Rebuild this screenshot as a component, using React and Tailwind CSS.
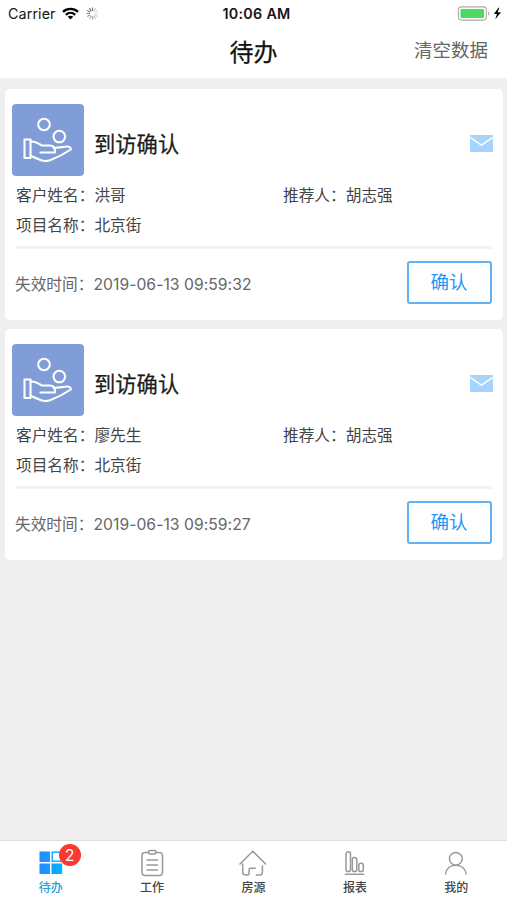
import React from 'react';

const tasks = [
  { id: 1, customer: '洪哥', time: '2019-06-13 09:59:32' },
  { id: 2, customer: '廖先生', time: '2019-06-13 09:59:27' },
];

function WifiIcon() {
  return (
    <svg className="ml-[6px] h-[13px] w-[17px]" viewBox="0 0 17 13" fill="none" stroke="#050505" strokeWidth="2.3">
      <path d="M1 4.9C5.2.9 11.8.9 16 4.9" />
      <path d="M3.8 7.8C6.5 5.3 10.5 5.3 13.2 7.8" />
      <path d="M8.5 12.5L5.7 9.8C7.3 8.4 9.7 8.4 11.3 9.8Z" fill="#050505" stroke="none" />
    </svg>
  );
}

function Spinner() {
  const shades = ['#777', '#ccc', '#ddd', '#ddd', '#ccc', '#bbb', '#aaa', '#aaa', '#999', '#888', '#777', '#666'];
  return (
    <svg className="ml-[7px] h-[13px] w-[13px]" viewBox="0 0 13 13" strokeWidth="1.2" strokeLinecap="round">
      {shades.map((c, i) => (
        <path key={i} d="M6.5 .9V3.4" stroke={c} transform={`rotate(${i * 30} 6.5 6.5)`} />
      ))}
    </svg>
  );
}

function StatusBar() {
  return (
    <div className="grid h-[27px] grid-cols-3 items-center pl-[8px] pr-[5px] text-[14.3px] text-[#151515]">
      <div className="flex items-center">
        <span className="tracking-[0.1px]">Carrier</span>
        <WifiIcon />
        <Spinner />
      </div>
      <div className="pl-[3px] text-center text-[14.3px] font-semibold tracking-[0.3px] whitespace-nowrap">10:06 AM</div>
      <svg className="h-[15px] w-[45px] justify-self-end" viewBox="0 0 45 15">
        <rect x="1.4" y=".9" width="28" height="13.2" rx="3.3" fill="none" stroke="#aaa" strokeWidth="1.1" />
        <rect x="3.5" y="3" width="23.5" height="9" rx="1" fill="#4cd964" />
        <path d="M31 5.2C32.6 6 32.6 9 31 9.8Z" fill="#aaa" />
        <path d="M41.4 1.8L36.9 8H39.9L38.3 13.3L44 6.3H40.6L42.3 1.8Z" fill="#050505" />
      </svg>
    </div>
  );
}

function HandIcon() {
  return (
    <div className="h-[72px] w-[72px] shrink-0 rounded-[4px] bg-[#809dd8]">
      <svg viewBox="0 0 72 72" fill="none" stroke="white" strokeWidth="2.1" strokeLinejoin="round" strokeLinecap="round">
        <circle cx="32" cy="20.5" r="5.8" />
        <circle cx="47.3" cy="32.6" r="5.8" />
        <path d="M12.5 35.5H18.5V54H12.5Z" />
        <path d="M19 37.5C24 37 26.5 39.5 30 41.5H38.5C42 42 43.5 44 43 48.5H28.5" />
        <path d="M41.5 43.8C47 44 51 42.5 55 42.5C57.5 42.5 59 43.5 58.8 45.5C53 49.5 44 54 38 56.2C35 57.2 31.5 57.3 28.5 56L19 52" />
      </svg>
    </div>
  );
}

function MailIcon() {
  return (
    <svg className="h-[17px] w-[23px]" viewBox="0 0 23 17">
      <path d="M0 0H23V17H0Z" fill="#a5d4fd" />
      <path d="M0 2.3L11.5 10L23 2.3" fill="none" stroke="white" strokeWidth="1.5" />
    </svg>
  );
}

function TaskCard({ customer, time }) {
  return (
    <article className="h-[231px] rounded-[5px] bg-white pt-[15px] pr-[11px] pl-[7px]">
      <div className="flex h-[72px] items-center">
        <HandIcon />
        <h2 className="ml-[10px] flex-1 pt-[8px] text-[21.3px] leading-[28px] font-normal text-[#1c1c1c] [-webkit-text-stroke:0.25px_#1c1c1c]">到访确认</h2>
        <div className="-mr-[1px] pt-[7px]"><MailIcon /></div>
      </div>
      <div className="mt-[5px] ml-[4px] grid grid-cols-[267px_1fr] text-[15.7px] leading-[30px] text-[#444]">
        <span>客户姓名：{customer}</span>
        <span>推荐人：胡志强</span>
        <span>项目名称：北京街</span>
      </div>
      <div className="mt-[5px] ml-[4px] h-[3px] bg-[#f3f3f3]" />
      <div className="mt-[12px] ml-[3px] flex items-center justify-between">
        <span className="pt-[5px] text-[15.7px] text-[#666]">失效时间：<span className="tracking-[0.04px]">{time}</span></span>
        <button className="h-[43px] w-[85px] rounded-[3px] border-2 border-[#5eb2f5] pr-[1px] text-[18.5px] text-[#2495f3]">确认</button>
      </div>
    </article>
  );
}

function TodoIcon() {
  return (
    <svg className="h-[28px] w-[28px]" viewBox="0 0 28 28">
      <defs>
        <linearGradient id="todo" gradientUnits="userSpaceOnUse" x1="2" x2="26" y1="0" y2="0">
          <stop stopColor="#2588ff" />
          <stop offset="1" stopColor="#00b7ff" />
        </linearGradient>
      </defs>
      <path d="M2.5 3.5H13V14H2.5ZM2.5 15.5H13V26H2.5ZM14.5 15.5H25.2V26H14.5Z" fill="url(#todo)" />
      <rect x="15.2" y="4.2" width="9.5" height="9" fill="none" stroke="#08a8ff" strokeWidth="1.4" />
    </svg>
  );
}

function LineIcon({ children }) {
  return (
    <svg className="h-[28px] w-[28px]" viewBox="0 0 28 28" fill="none" stroke="#999" strokeWidth="1.5" strokeLinecap="round" strokeLinejoin="round">
      {children}
    </svg>
  );
}

const tabs = [
  {
    label: '工作',
    icon: (
      <LineIcon>
        <path d="M10.5 3.5H7A3 3 0 0 0 4 6.5V23.5A3 3 0 0 0 7 26.5H21.5A3 3 0 0 0 24.5 23.5V6.5A3 3 0 0 0 21.5 3.5H18M9 11H19.5M9 16H19.5M9 21H19.5" />
        <rect x="10.5" y="1.5" width="7.4" height="3.6" rx="1.5" />
      </LineIcon>
    ),
  },
  {
    label: '房源',
    icon: (
      <LineIcon>
        <path d="M1 15L13.8 2.2L26.6 15M3.7 15V23Q3.7 26 6.7 26H8.2Q10.1 26 10.1 24V20.5Q10.1 19.3 11.3 19.3H16.3M23.4 17V23.5Q23.4 26 20.8 26H17.3" />
      </LineIcon>
    ),
  },
  {
    label: '报表',
    icon: (
      <LineIcon>
        <rect x="5" y="2.8" width="4.5" height="19.7" rx="2.1" />
        <rect x="11.3" y="8.5" width="4.5" height="14" rx="2.1" />
        <rect x="17.8" y="14.3" width="4.5" height="8.2" rx="2.1" />
        <path d="M4.5 25.3H22.7" />
      </LineIcon>
    ),
  },
  {
    label: '我的',
    icon: (
      <LineIcon>
        <circle cx="13.8" cy="9.8" r="6.4" />
        <path d="M3.5 25C4.2 19.5 8.3 16.2 13.8 16.2S23.4 19.5 24.1 25" />
      </LineIcon>
    ),
  },
];

export default function App() {
  return (
    <div className="flex h-[900px] w-[507px] flex-col overflow-hidden bg-[#efefef] font-[Inter,'Noto_Sans_CJK_SC',sans-serif]">
      <header className="h-[78px] shrink-0 bg-white">
        <StatusBar />
        <div className="grid h-[50px] grid-cols-3 items-center">
          <h1 className="col-start-2 pt-[1px] text-center text-[24px] leading-[50px] font-normal text-[#111] [-webkit-text-stroke:0.25px_#111]">待办</h1>
          <button className="justify-self-end pr-[19px] pb-[4px] text-[18.5px] text-[#666]">清空数据</button>
        </div>
      </header>
      <main className="flex flex-1 flex-col gap-[9px] pt-[11px] pr-[4px] pl-[5px]">
        {tasks.map((t) => <TaskCard key={t.id} {...t} />)}
      </main>
      <nav className="grid h-[60px] shrink-0 grid-cols-5 border-t border-[#dedede] bg-white">
        <div className="flex flex-col items-center pt-[7px]">
          <div className="relative h-[28px]">
            <TodoIcon />
            <span className="absolute -top-[4px] left-[22px] flex h-[22px] w-[22px] items-center justify-center rounded-full bg-[#fb3931] text-[16px] text-white">2</span>
          </div>
          <span className="mt-[4px] text-[12px] leading-[16px] font-medium text-[#279fdf]">待办</span>
        </div>
        {tabs.map((t) => (
          <div key={t.label} className="flex flex-col items-center pt-[8px]">
            {t.icon}
            <span className="mt-[3px] text-[12px] leading-[16px] font-medium text-[#444]">{t.label}</span>
          </div>
        ))}
      </nav>
    </div>
  );
}
